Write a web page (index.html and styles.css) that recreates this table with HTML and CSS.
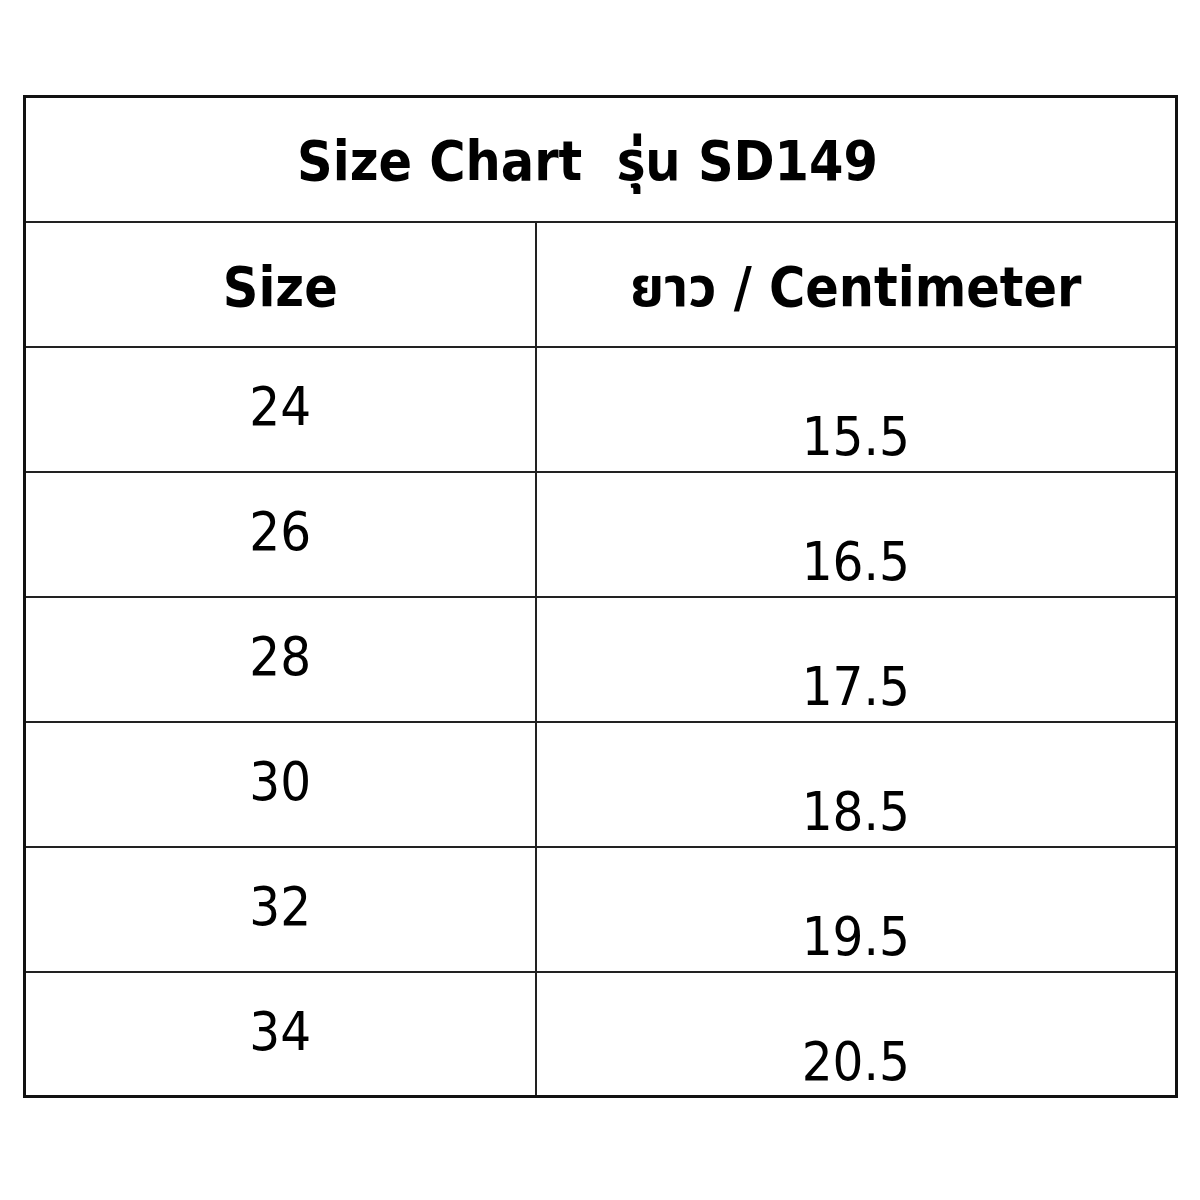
FILE: index.html
```html
<!DOCTYPE html>
<html lang="th">
<head>
<meta charset="utf-8">
<title>Size Chart รุ่น SD149</title>
<link rel="stylesheet" href="styles.css">
</head>
<body>
<div class="page">
  <table class="chart">
    <colgroup>
      <col class="col-size">
      <col class="col-len">
    </colgroup>
    <thead>
      <tr class="title-row">
        <th colspan="2" class="title">Size Chart&nbsp; รุ่น SD149</th>
      </tr>
      <tr class="head-row">
        <th class="head">Size</th>
        <th class="head">ยาว / Centimeter</th>
      </tr>
    </thead>
    <tbody>
      <tr><td class="size">24</td><td class="len">15.5</td></tr>
      <tr><td class="size">26</td><td class="len">16.5</td></tr>
      <tr><td class="size">28</td><td class="len">17.5</td></tr>
      <tr><td class="size">30</td><td class="len">18.5</td></tr>
      <tr><td class="size">32</td><td class="len">19.5</td></tr>
      <tr><td class="size">34</td><td class="len">20.5</td></tr>
    </tbody>
  </table>
</div>
</body>
</html>
```
FILE: styles.css
```css
html, body {
  margin: 0;
  padding: 0;
  background: #ffffff;
}
.page {
  padding: 95px 0 0 23px;
}
.chart {
  border-collapse: collapse;
  width: 1155px;
  border: 3px solid #111;
  font-family: "DejaVu Sans Condensed", "DejaVu Sans", "Noto Sans Thai", "Loma", "Garuda", "Noto Sans", sans-serif;
  color: #000;
  table-layout: fixed;
}
.col-size { width: 511px; }
.chart tr {
  height: 125px;
}
.chart th, .chart td {
  border: 2px solid #222;
  text-align: center;
  vertical-align: middle;
  padding: 0;
  line-height: 1;
}
.title, .head {
  font-weight: bold;
  font-size: 55px;
}
.chart .title {
  padding-top: 4px;
  padding-right: 26px;
}
.chart .head {
  padding-top: 6px;
}
.size, .len {
  font-weight: normal;
  font-size: 54px;
}
.chart .size {
  padding-bottom: 4px;
}
.chart .len {
  padding-top: 56px;
}
```
